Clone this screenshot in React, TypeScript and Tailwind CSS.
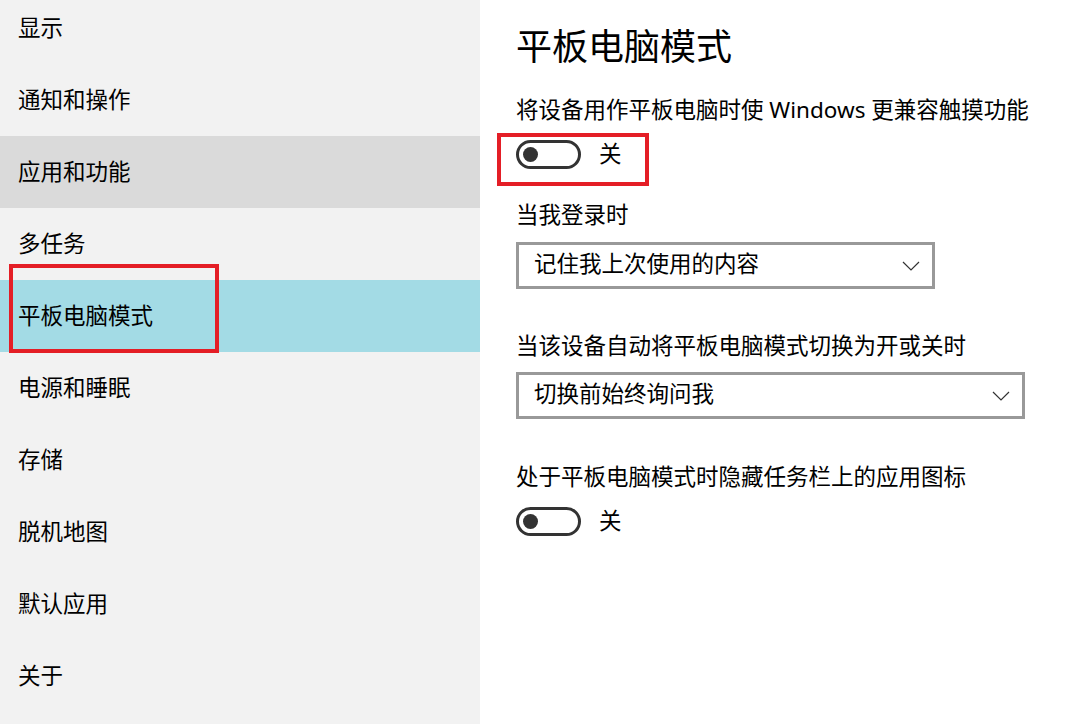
import { ReactNode } from 'react'

const FONT = { fontFamily: '"Noto Sans", "Noto Sans CJK SC", sans-serif' }

const NAV_ITEMS = [
  '显示',
  '通知和操作',
  '应用和功能',
  '多任务',
  '平板电脑模式',
  '电源和睡眠',
  '存储',
  '脱机地图',
  '默认应用',
  '关于',
]

function NavItem({ label }: { label: string }) {
  const hover = label === '应用和功能'
  const selected = label === '平板电脑模式'
  return (
    <div
      className={`relative h-[72px] flex items-center pl-[18px] text-[22.5px] text-black ${
        selected ? 'bg-[#a3dbe5]' : hover ? 'bg-[#dadada]' : ''
      }`}
    >
      {label}
      {selected && (
        <div className="absolute left-[9px] top-[-16px] w-[210px] h-[89px] border-4 border-[#e41e26] pointer-events-none" />
      )}
    </div>
  )
}

function Toggle({ children }: { children?: ReactNode }) {
  return (
    <div className="relative flex items-center h-[29px]">
      <div className="w-[65px] h-[29px] rounded-full border-[3px] border-[#333] flex items-center pl-[4px]">
        <div className="w-[15px] h-[15px] rounded-full bg-[#333]" />
      </div>
      <span className="ml-[18px] text-[22.5px] text-black leading-none">关</span>
      {children}
    </div>
  )
}

function Select({ value, width }: { value: string; width: string }) {
  return (
    <div
      className={`${width} h-[47px] border-[3px] border-[#999] bg-white flex items-center justify-between pl-[15px] pr-[12px]`}
    >
      <span className="text-[22.5px] leading-[30px] text-black -mt-[3px]">{value}</span>
      <svg width="18" height="10" viewBox="0 0 18 10" fill="none">
        <path d="M1 1 L9 9 L17 1" stroke="#333" strokeWidth="1.2" />
      </svg>
    </div>
  )
}

export default function App() {
  return (
    <div className="w-[1081px] h-[724px] flex overflow-hidden bg-white" style={FONT}>
      {/* Sidebar */}
      <div className="w-[480px] h-full bg-[#f2f2f2] shrink-0">
        <div className="-mt-2">
          {NAV_ITEMS.map((item) => (
            <NavItem key={item} label={item} />
          ))}
        </div>
      </div>

      {/* Content */}
      <div className="flex-1 pl-[36px] pt-[23px] text-black">
        <h1 className="text-[36px] leading-[48px] font-normal">平板电脑模式</h1>

        <p className="mt-[24px] text-[22.5px] leading-[30px]">将设备用作平板电脑时使 Windows 更兼容触摸功能</p>
        <div className="mt-[15px]">
          <Toggle>
            <div className="absolute left-[-19px] top-[-7px] w-[152px] h-[53px] border-4 border-[#e41e26] pointer-events-none" />
          </Toggle>
        </div>

        <p className="mt-[31px] text-[22.5px] leading-[30px]">当我登录时</p>
        <div className="mt-[12px]">
          <Select value="记住我上次使用的内容" width="w-[419px]" />
        </div>

        <p className="mt-[42px] text-[22.5px] leading-[30px]">当该设备自动将平板电脑模式切换为开或关时</p>
        <div className="mt-[11px]">
          <Select value="切换前始终询问我" width="w-[509px]" />
        </div>

        <p className="mt-[43px] text-[22.5px] leading-[30px]">处于平板电脑模式时隐藏任务栏上的应用图标</p>
        <div className="mt-[15px]">
          <Toggle />
        </div>
      </div>
    </div>
  )
}
